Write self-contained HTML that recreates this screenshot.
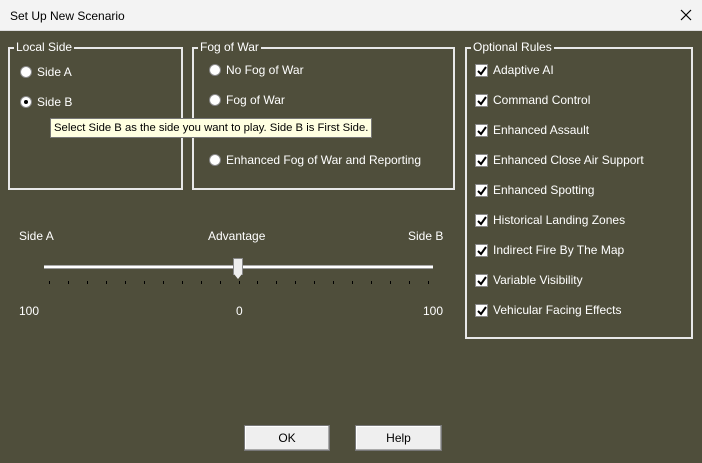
<!DOCTYPE html>
<html><head><style>
*{margin:0;padding:0;box-sizing:border-box}
body{width:702px;height:463px;background:#4f4e3b;font-family:"Liberation Sans",Arial,sans-serif;font-size:12px;color:#fff;position:relative;overflow:hidden}
.a{position:absolute;white-space:nowrap}
.title{left:0;top:0;width:702px;height:31px;background:#f3f3f3;color:#000;border-bottom:1px solid #ddd}
.grp{position:absolute;border:2px solid #e8e8e8}
.lg{position:absolute;top:-9px;left:4px;background:#4f4e3b;padding:0 2px;line-height:14px}
.r{position:absolute;width:12px;height:12px;border-radius:50%;background:#fff;border:1px solid #888}
.r.on::after{content:"";position:absolute;left:3px;top:3px;width:4px;height:4px;border-radius:50%;background:#000}
.cb{position:absolute;width:13px;height:13px;background:#fff;border:1px solid #888}
.cb svg{position:absolute;left:1px;top:1px}
.btn{position:absolute;background:#efefef;border:1px solid #777;box-shadow:inset -1px -1px 0 #aaa,inset 1px 1px 0 #fff;color:#000;text-align:center;line-height:24px;font-size:12px}
.tick{position:absolute;top:281px;width:1px;height:3px;background:#000}
</style></head><body>
<div class="a title"><span class="a" style="left:10px;top:9px;font-size:12px">Set Up New Scenario</span>
<svg class="a" style="left:680px;top:9px" width="12" height="12"><path d="M1 1L11 11M11 1L1 11" stroke="#000" stroke-width="1.2"/></svg></div>

<div class="grp" style="left:8px;top:47px;width:175px;height:143px"><span class="lg">Local Side</span></div>
<div class="r" style="left:20px;top:66px"></div><span class="a" style="left:37px;top:65px">Side A</span>
<div class="r on" style="left:20px;top:96px"></div><span class="a" style="left:37px;top:95px">Side B</span>

<div class="grp" style="left:192px;top:47px;width:263px;height:143px"><span class="lg">Fog of War</span></div>
<div class="r" style="left:209px;top:64px"></div><span class="a" style="left:226px;top:63px">No Fog of War</span>
<div class="r" style="left:209px;top:94px"></div><span class="a" style="left:226px;top:93px">Fog of War</span>
<div class="r" style="left:209px;top:154px"></div><span class="a" style="left:226px;top:153px">Enhanced Fog of War and Reporting</span>

<div class="a" style="left:50px;top:118px;width:322px;height:20px;background:#ffffe1;border:1px solid #777;color:#000;line-height:18px;padding-left:3px;font-size:11.3px;overflow:hidden">Select Side B as the side you want to play. Side B is First Side.</div>

<div class="grp" style="left:465px;top:47px;width:228px;height:292px"><span class="lg">Optional Rules</span></div>
<div id="cbs"></div>

<span class="a" style="left:19px;top:229px">Side A</span>
<span class="a" style="left:208px;top:229px">Advantage</span>
<span class="a" style="left:408px;top:229px">Side B</span>
<div class="a" style="left:44px;top:265px;width:389px;height:4px;background:#fff;border-top:1px solid #aaa;border-bottom:1px solid #999"></div>
<div class="a" style="left:233px;top:258px;width:10px;height:17px;background:#eee;border:1px solid #888"></div>
<svg class="a" style="left:233px;top:274px" width="10" height="6"><path d="M1 0L5 5L9 0Z" fill="#eee"/></svg>
<div id="ticks"></div>
<span class="a" style="left:19px;top:304px">100</span>
<span class="a" style="left:236px;top:304px">0</span>
<span class="a" style="left:423px;top:304px">100</span>

<div class="btn" style="left:244px;top:425px;width:86px;height:26px">OK</div>
<div class="btn" style="left:355px;top:425px;width:87px;height:26px">Help</div>
<script>
var n=["Adaptive AI","Command Control","Enhanced Assault","Enhanced Close Air Support","Enhanced Spotting","Historical Landing Zones","Indirect Fire By The Map","Variable Visibility","Vehicular Facing Effects"],h="";
n.forEach(function(t,i){var y=64+i*30;h+='<div class="cb" style="left:475px;top:'+y+'px"><svg width="10" height="10"><path d="M1 5L4 8L9 1" stroke="#000" stroke-width="2" fill="none"/></svg></div><span class="a" style="left:493px;top:'+(y-1)+'px">'+t+'</span>';});
document.getElementById("cbs").innerHTML=h;h="";
for(var i=0;i<21;i++){h+='<div class="tick" style="left:'+(49+i*18.95).toFixed(0)+'px"></div>';}
document.getElementById("ticks").innerHTML=h;
</script>
</body></html>
